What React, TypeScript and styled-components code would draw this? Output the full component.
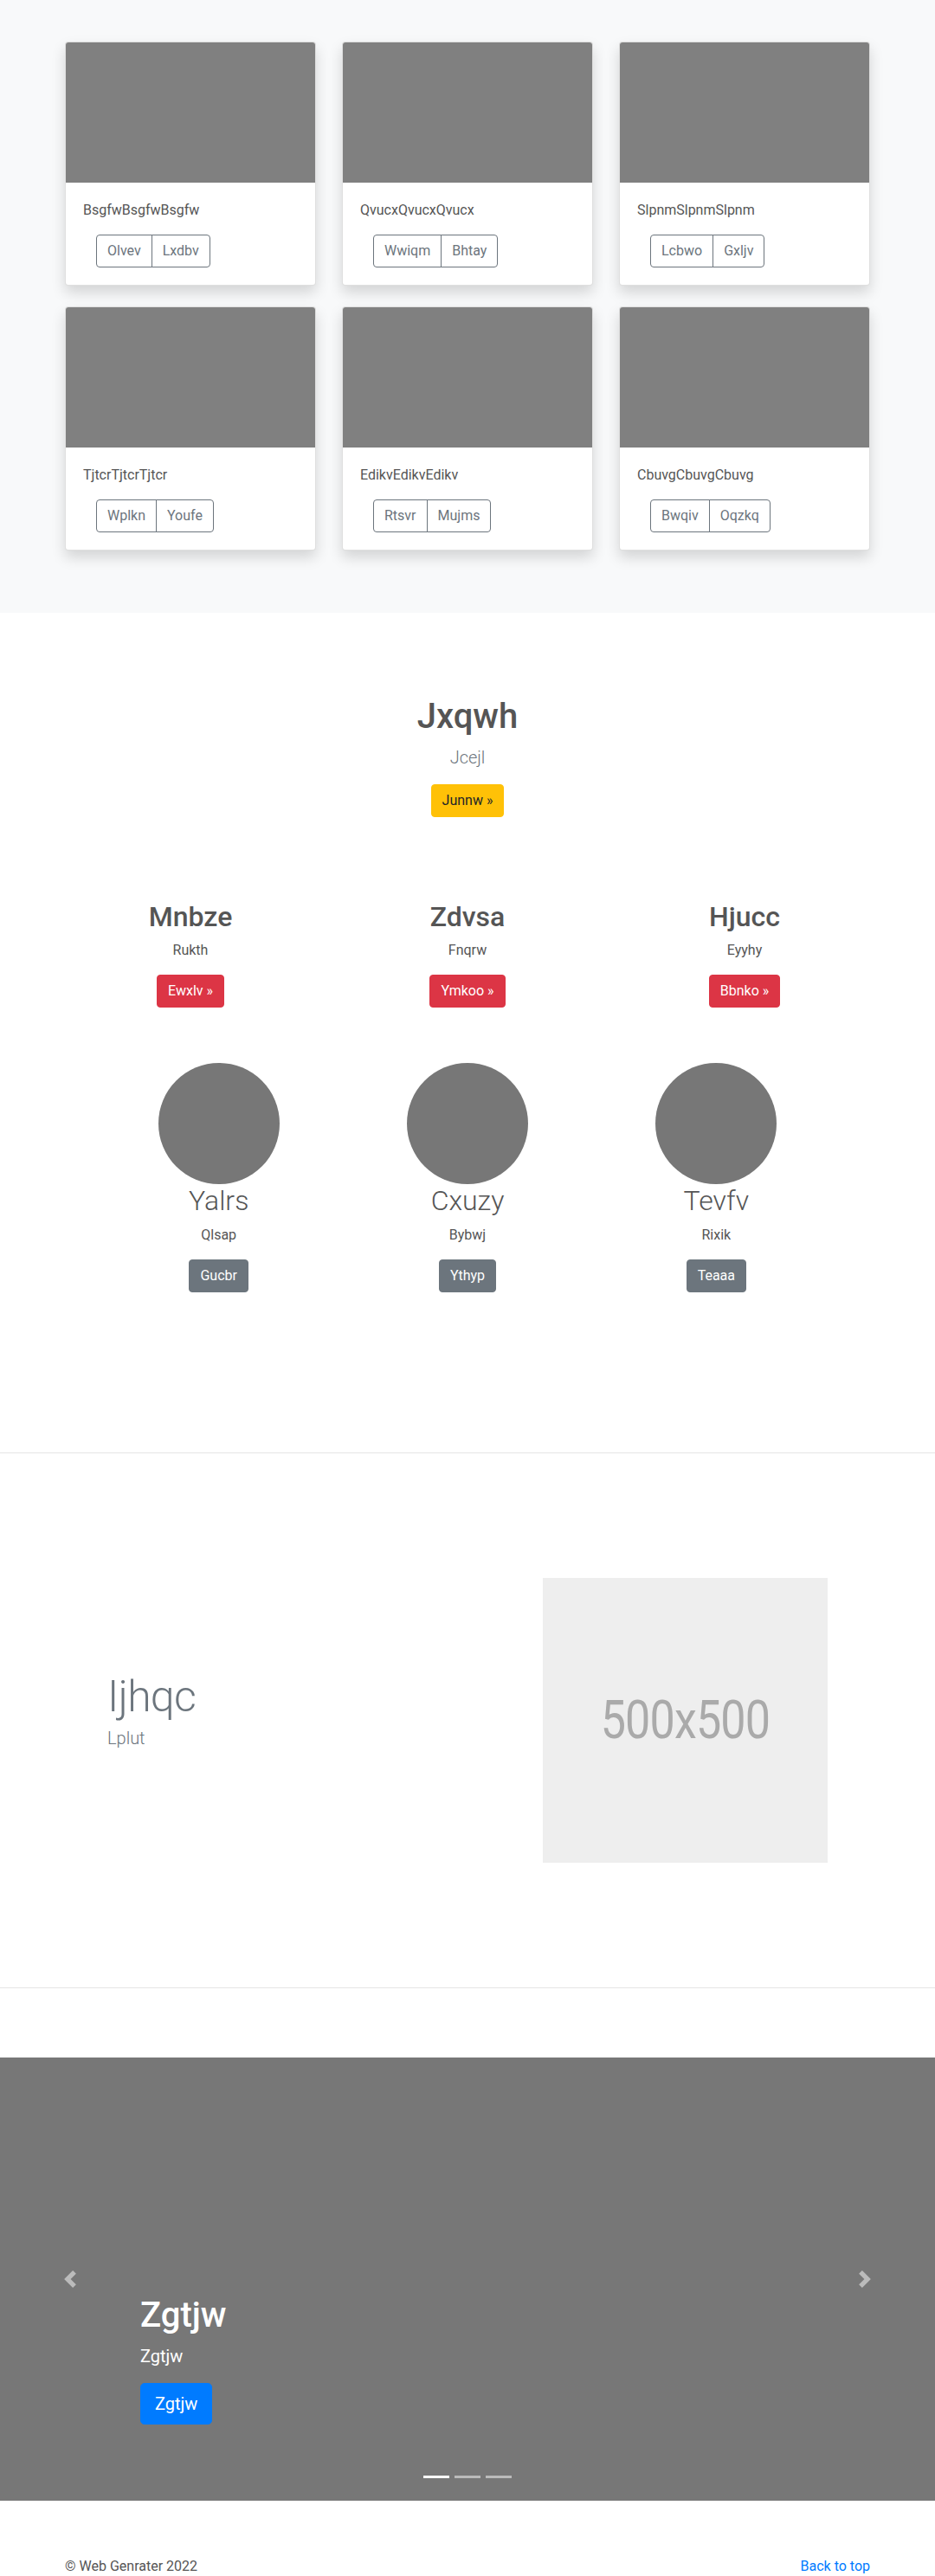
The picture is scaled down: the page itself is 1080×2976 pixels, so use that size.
import React from "react";
import styled, { createGlobalStyle } from "styled-components";

const GlobalStyle = createGlobalStyle`
  *, *::before, *::after { box-sizing: border-box; }
  html, body { margin: 0; padding: 0; }
  body {
    font-family: Roboto, "Segoe UI", "Helvetica Neue", Arial, sans-serif;
    font-size: 16px;
    line-height: 1.5;
    color: #555;
    background: #fff;
  }
  h1, h2, p { margin: 0; }
`;

/* ---------- shared ---------- */
const Container = styled.div<{ $w?: number; $pad?: number }>`
  width: ${(p) => p.$w ?? 960}px;
  margin: 0 auto;
  padding: 0 ${(p) => p.$pad ?? 15}px;
`;

const Btn = styled.a<{ $variant: "warning" | "danger" | "secondary" | "primary"; $lg?: boolean }>`
  display: inline-block;
  font-size: ${(p) => (p.$lg ? 20 : 16)}px;
  line-height: 1.5;
  padding: ${(p) => (p.$lg ? "8px 16px" : "6px 12px")};
  border-radius: ${(p) => (p.$lg ? 4.8 : 4)}px;
  border: 1px solid transparent;
  text-decoration: none;
  cursor: pointer;
  ${(p) =>
    p.$variant === "warning"
      ? "background:#ffc107;border-color:#ffc107;color:#212529;"
      : p.$variant === "danger"
      ? "background:#dc3545;border-color:#dc3545;color:#fff;"
      : p.$variant === "secondary"
      ? "background:#6c757d;border-color:#6c757d;color:#fff;"
      : "background:#007bff;border-color:#007bff;color:#fff;"}
`;

/* ---------- album ---------- */
const Album = styled.section`
  background: #f8f9fa;
  padding: 48px 0 72px;
`;

const CardGrid = styled.div`
  display: grid;
  grid-template-columns: repeat(3, 290px);
  column-gap: 30px;
  row-gap: 24px;
`;

const Card = styled.div`
  display: flex;
  flex-direction: column;
  background: #fff;
  border: 1px solid rgba(0, 0, 0, 0.125);
  border-radius: 4px;
  overflow: hidden;
  box-shadow: 0 8px 16px rgba(0, 0, 0, 0.15);
`;

const Thumb = styled.div`
  height: 162px;
  background: #808080;
`;

const CardBody = styled.div`
  padding: 20px;
`;

const CardText = styled.p`
  margin-bottom: 16px;
`;

const BtnGroup = styled.div`
  display: inline-flex;
  margin-left: 15px;
`;

const OutlineBtn = styled.button`
  font-family: inherit;
  font-size: 16px;
  line-height: 1.5;
  padding: 6px 12px;
  background: transparent;
  color: #6c757d;
  border: 1px solid #6c757d;
  border-radius: 0;
  &:first-child { border-radius: 4px 0 0 4px; }
  &:last-child { border-radius: 0 4px 4px 0; margin-left: -1px; }
`;

/* ---------- hero ---------- */
const Hero = styled.section`
  text-align: center;
  padding: 96px 0 96px;
`;

const HeroTitle = styled.h1`
  font-size: 40px;
  font-weight: 500;
  line-height: 1.2;
  margin-bottom: 8px;
  color: #555;
`;

const Lead = styled.p<{ $left?: boolean }>`
  font-size: 20px;
  font-weight: 300;
  color: #6c757d;
  margin-bottom: 16px;
  text-align: ${(p) => (p.$left ? "left" : "center")};
`;

/* ---------- features ---------- */
const ThreeCols = styled.div<{ $col: number }>`
  display: grid;
  grid-template-columns: repeat(3, ${(p) => p.$col}px);
  text-align: center;
`;

const FeatureTitle = styled.h2`
  font-size: 32px;
  font-weight: 500;
  line-height: 1.2;
  margin-bottom: 8px;
`;

const ColText = styled.p`
  margin: 0 12px 16px;
`;

/* ---------- marketing ---------- */
const Marketing = styled.section`
  padding: 64px 0 185px;
`;

const MarketingCol = styled.div`
  display: flex;
  flex-direction: column;
  align-items: center;
`;

const Circle = styled.div`
  width: 140px;
  height: 140px;
  border-radius: 50%;
  background: #777;
`;

const MarketingTitle = styled.h2`
  font-size: 32px;
  font-weight: 300;
  line-height: 1.2;
  margin-bottom: 8px;
`;

const Divider = styled.hr`
  margin: 0;
  border: 0;
  border-top: 1px solid rgba(0, 0, 0, 0.1);
`;

/* ---------- featurette ---------- */
const Featurette = styled.section`
  padding: 144px 0;
`;

const FeatRow = styled.div`
  display: grid;
  grid-template-columns: 7fr 5fr;
  align-items: center;
`;

const FeatCol = styled.div`
  padding: 0 15px;
`;

const FeatHeading = styled.h2`
  font-size: 50px;
  font-weight: 300;
  line-height: 1;
  letter-spacing: -0.8px;
  color: #6c757d;
  margin-bottom: 8px;
`;

const Placeholder = styled.div`
  width: 100%;
  aspect-ratio: 1 / 1;
  background: #eee;
  color: #aaa;
  display: flex;
  align-items: center;
  justify-content: center;
`;

const PlaceholderLabel = styled.span`
  display: inline-block;
  font-size: 62px;
  line-height: 1;
  letter-spacing: -1px;
  transform: scaleX(0.84);
`;

/* ---------- carousel ---------- */
const Carousel = styled.section`
  position: relative;
  height: 512px;
  margin-top: 80px;
  margin-bottom: 64px;
  background: #777;
  overflow: hidden;
`;

const Control = styled.a<{ $side: "left" | "right" }>`
  position: absolute;
  top: 0;
  bottom: 0;
  ${(p) => p.$side}: 0;
  width: 15%;
  display: flex;
  align-items: center;
  justify-content: center;
  opacity: 0.5;
`;

const Caption = styled.div`
  position: absolute;
  left: 15%;
  right: 15%;
  bottom: 48px;
  padding: 20px 0;
  color: #fff;
  text-align: left;
  z-index: 10;
`;

const CaptionTitle = styled.h1`
  font-size: 40px;
  font-weight: 500;
  line-height: 1.2;
  margin-bottom: 8px;
`;

const CaptionText = styled.p`
  font-size: 20px;
  margin-bottom: 16px;
`;

const CaptionAction = styled.div`
  margin-bottom: 20px;
  height: 48px;
`;

const Indicators = styled.ol`
  position: absolute;
  left: 0;
  right: 0;
  bottom: 0;
  margin: 0 0 16px;
  padding: 0;
  list-style: none;
  display: flex;
  justify-content: center;
  z-index: 15;
`;

const Indicator = styled.li<{ $active?: boolean }>`
  width: 30px;
  height: 3px;
  margin: 0 3px;
  border-top: 10px solid transparent;
  border-bottom: 10px solid transparent;
  background: #fff;
  background-clip: padding-box;
  box-sizing: content-box;
  opacity: ${(p) => (p.$active ? 1 : 0.5)};
`;

/* ---------- footer ---------- */
const FooterBar = styled.footer`
  display: flex;
  justify-content: space-between;
`;

const TopLink = styled.a`
  color: #007bff;
  text-decoration: none;
`;

const Chevron = ({ dir }: { dir: "prev" | "next" }) => (
  <svg width="20" height="20" viewBox="0 0 8 8" fill="#fff">
    {dir === "prev" ? (
      <path d="M5.25 0l-4 4 4 4 1.5-1.5L4.25 4l2.5-2.5L5.25 0z" />
    ) : (
      <path d="M2.75 0l-1.5 1.5L3.75 4l-2.5 2.5L2.75 8l4-4-4-4z" />
    )}
  </svg>
);

const cards = [
  { t: "BsgfwBsgfwBsgfw", a: "Olvev", b: "Lxdbv" },
  { t: "QvucxQvucxQvucx", a: "Wwiqm", b: "Bhtay" },
  { t: "SlpnmSlpnmSlpnm", a: "Lcbwo", b: "Gxljv" },
  { t: "TjtcrTjtcrTjtcr", a: "Wplkn", b: "Youfe" },
  { t: "EdikvEdikvEdikv", a: "Rtsvr", b: "Mujms" },
  { t: "CbuvgCbuvgCbuvg", a: "Bwqiv", b: "Oqzkq" },
];

const features = [
  { t: "Mnbze", p: "Rukth", b: "Ewxlv »" },
  { t: "Zdvsa", p: "Fnqrw", b: "Ymkoo »" },
  { t: "Hjucc", p: "Eyyhy", b: "Bbnko »" },
];

const people = [
  { t: "Yalrs", p: "Qlsap", b: "Gucbr" },
  { t: "Cxuzy", p: "Bybwj", b: "Ythyp" },
  { t: "Tevfv", p: "Rixik", b: "Teaaa" },
];

export default function App() {
  return (
    <>
      <GlobalStyle />
      <Album>
        <Container>
          <CardGrid>
            {cards.map((c) => (
              <Card key={c.t}>
                <Thumb />
                <CardBody>
                  <CardText>{c.t}</CardText>
                  <BtnGroup>
                    <OutlineBtn>{c.a}</OutlineBtn>
                    <OutlineBtn>{c.b}</OutlineBtn>
                  </BtnGroup>
                </CardBody>
              </Card>
            ))}
          </CardGrid>
        </Container>
      </Album>

      <Hero>
        <HeroTitle>Jxqwh</HeroTitle>
        <Lead>Jcejl</Lead>
        <Btn $variant="warning">Junnw »</Btn>
      </Hero>

      <Container $pad={0}>
        <ThreeCols $col={320}>
          {features.map((f) => (
            <div key={f.t}>
              <FeatureTitle>{f.t}</FeatureTitle>
              <ColText>{f.p}</ColText>
              <Btn $variant="danger">{f.b}</Btn>
            </div>
          ))}
        </ThreeCols>
      </Container>

      <Marketing>
        <Container $w={862} $pad={0}>
          <ThreeCols $col={862 / 3}>
            {people.map((m) => (
              <MarketingCol key={m.t}>
                <Circle />
                <MarketingTitle>{m.t}</MarketingTitle>
                <ColText>{m.p}</ColText>
                <Btn $variant="secondary">{m.b}</Btn>
              </MarketingCol>
            ))}
          </ThreeCols>
        </Container>
      </Marketing>

      <Divider />

      <Featurette>
        <Container $w={862} $pad={0}>
          <FeatRow>
            <FeatCol>
              <FeatHeading>Ijhqc</FeatHeading>
              <Lead $left>Lplut</Lead>
            </FeatCol>
            <FeatCol>
              <Placeholder>
                <PlaceholderLabel>500x500</PlaceholderLabel>
              </Placeholder>
            </FeatCol>
          </FeatRow>
        </Container>
      </Featurette>

      <Divider />

      <Carousel>
        <Control $side="left">
          <Chevron dir="prev" />
        </Control>
        <Caption>
          <CaptionTitle>Zgtjw</CaptionTitle>
          <CaptionText>Zgtjw</CaptionText>
          <CaptionAction>
            <Btn $variant="primary" $lg>
              Zgtjw
            </Btn>
          </CaptionAction>
        </Caption>
        <Control $side="right">
          <Chevron dir="next" />
        </Control>
        <Indicators>
          <Indicator $active />
          <Indicator />
          <Indicator />
        </Indicators>
      </Carousel>

      <Container>
        <FooterBar>
          <p>© Web Genrater 2022</p>
          <TopLink href="#">Back to top</TopLink>
        </FooterBar>
      </Container>
    </>
  );
}
